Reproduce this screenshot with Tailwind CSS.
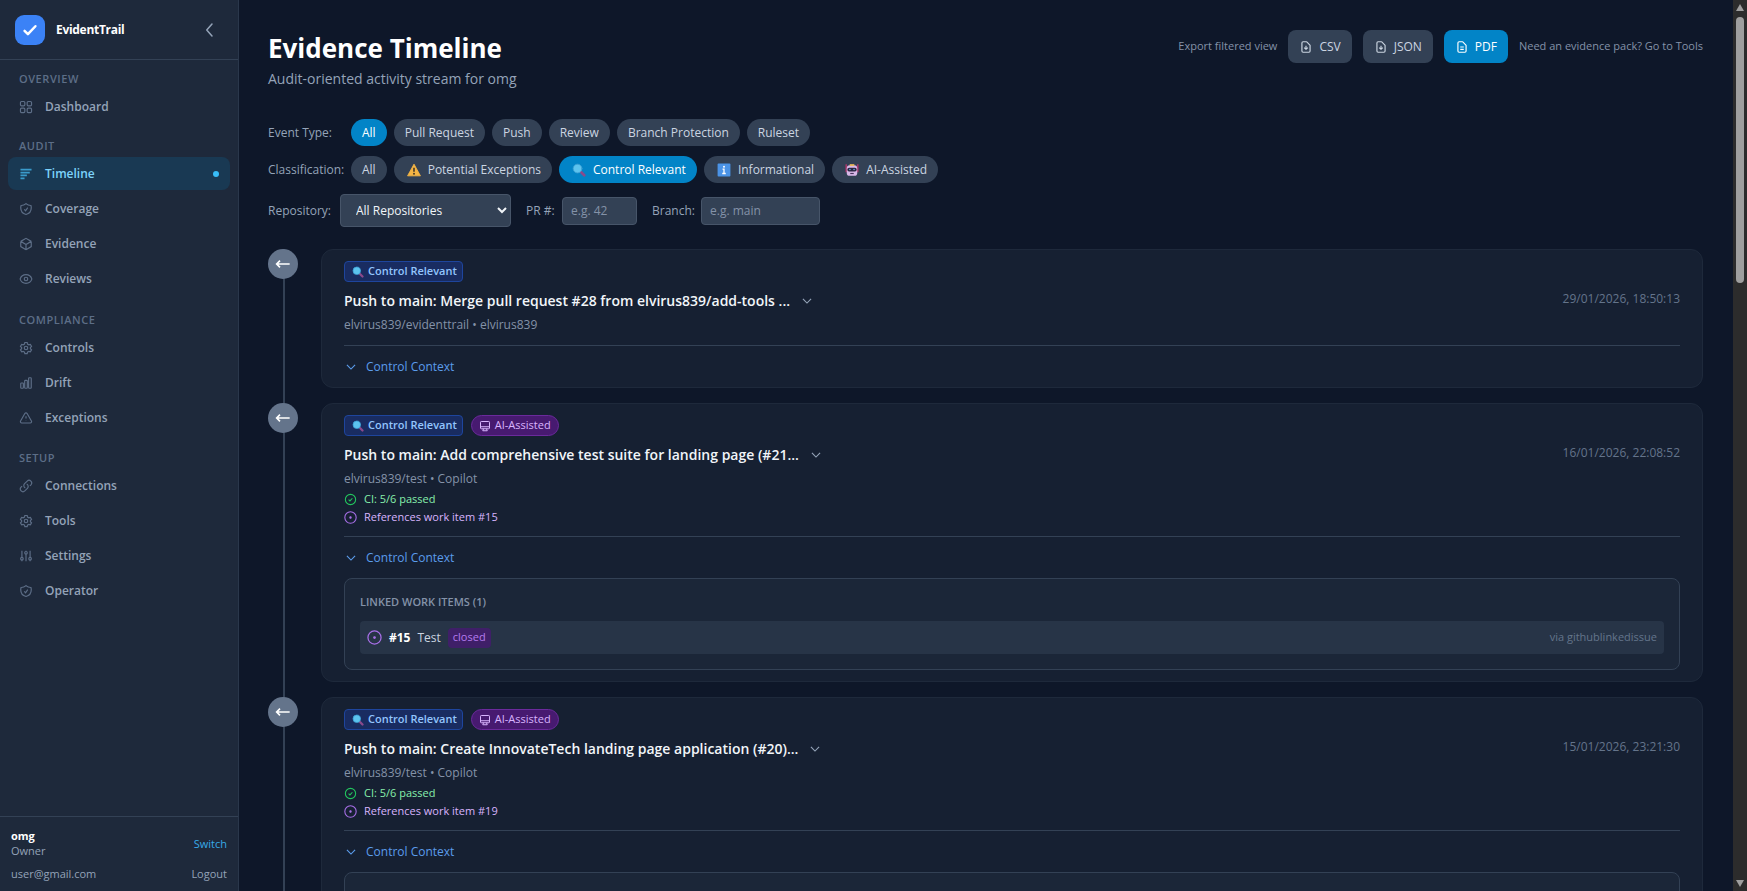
<!DOCTYPE html>
<html lang="en">
<head>
    <meta charset="UTF-8">
    <meta name="viewport" content="width=device-width, initial-scale=1.0">
    <title>EvidentTrail - Evidence Timeline</title>
    <script src="https://cdn.jsdelivr.net/npm/@tailwindcss/browser@4"></script>
</head>
<body class="h-screen flex overflow-hidden bg-[#0e1729] text-[#94a3b8] font-['Open_Sans','Noto_Sans',sans-serif]">

    <!-- Shared icons -->
    <svg class="hidden">
        <symbol id="i-grid" viewBox="0 0 24 24"><rect x="2.500" y="2.500" width="7.500" height="7.500" rx="1.8"/><rect x="14" y="2.500" width="7.500" height="7.500" rx="1.8"/><rect x="2.500" y="14" width="7.500" height="7.500" rx="1.8"/><rect x="14" y="14" width="7.500" height="7.500" rx="1.8"/></symbol>
        <symbol id="i-lines" viewBox="0 0 24 24"><path stroke-width="3" d="M2.500 4.500h19M2.500 9.500h16M2.500 14.500h11M2.500 19.500h7"/></symbol>
        <symbol id="i-shield" viewBox="0 0 24 24"><path d="M9 12.75 11.25 15 15 9.75M12 2.7A12 12 0 0 1 3.6 6 12 12 0 0 0 3 9.75c0 5.6 3.8 10.3 9 11.6 5.2-1.3 9-6 9-11.6 0-1.3-.2-2.6-.6-3.75h-.15A12 12 0 0 1 12 2.7Z"/></symbol>
        <symbol id="i-cube" viewBox="0 0 24 24"><path d="m21 7.5-9-5.25L3 7.5m18 0-9 5.25m9-5.25v9l-9 5.25M3 7.5l9 5.25M3 7.5v9l9 5.25m0-9v9"/></symbol>
        <symbol id="i-eye" viewBox="0 0 24 24"><path d="M2 12.3a1 1 0 0 1 0-.6C3.4 7.500 7.400 4.500 12 4.500s8.600 3 10 7.200a1 1 0 0 1 0 .6c-1.400 4.200-5.400 7.200-10 7.200s-8.600-3-10-7.200Z"/><circle cx="12" cy="12" r="3"/></symbol>
        <symbol id="i-cog" viewBox="0 0 24 24"><path d="M10 2.500h4l.6 2.700 2.300 1.300 2.600-.8 2 3.500-2 1.900v2.000l2 1.900-2 3.500-2.600-.8-2.300 1.300-.6 2.700h-4l-.6-2.700-2.300-1.300-2.600.8-2-3.500 2-1.900v-2l-2-1.900 2-3.500 2.600.8 2.300-1.300Z"/><circle cx="12" cy="12" r="3"/></symbol>
        <symbol id="i-chart" viewBox="0 0 24 24"><path d="M3 13.100c0-.6.5-1.100 1.100-1.100h2.300c.6 0 1.100.5 1.100 1.100v6.800c0 .6-.5 1.100-1.100 1.100H4.100C3.500 21 3 20.500 3 19.900ZM9.750 8.600c0-.6.5-1.100 1.100-1.100h2.300c.6 0 1.100.5 1.100 1.100v11.300c0 .6-.5 1.100-1.100 1.100h-2.300c-.6 0-1.100-.5-1.100-1.100ZM16.500 4.100c0-.6.5-1.100 1.100-1.100h2.300c.6 0 1.100.5 1.100 1.100v15.800c0 .6-.5 1.100-1.100 1.100h-2.300c-.6 0-1.100-.5-1.100-1.100Z"/></symbol>
        <symbol id="i-warn" viewBox="0 0 24 24"><path d="M12 9v4m0 3v.1M2.700 17.100c-.9 1.500.2 3.400 1.900 3.400h14.800c1.700 0 2.800-1.900 1.900-3.400L13.900 4.400c-.9-1.500-3-1.500-3.900 0Z"/></symbol>
        <symbol id="i-link" viewBox="0 0 24 24"><path d="M13.190 8.690a4.500 4.500 0 0 1 1.240 7.240l-4.500 4.500a4.500 4.500 0 0 1-6.360-6.360l1.760-1.760m13.350-.62 1.760-1.760a4.500 4.500 0 0 0-6.360-6.360l-4.500 4.500a4.500 4.500 0 0 0 1.240 7.240"/></symbol>
        <symbol id="i-sliders" viewBox="0 0 24 24"><path stroke-width="2" d="M5 3v11M5 19v2M12 3v1M12 9v12M19 3v11M19 19v2"/><circle cx="5" cy="16.500" r="2.200"/><circle cx="12" cy="6.500" r="2.200"/><circle cx="19" cy="16.500" r="2.200"/></symbol>
        <symbol id="i-filedown" viewBox="0 0 24 24"><path d="M12 10v6m0 0-3-3m3 3 3-3m2 8H7a2 2 0 0 1-2-2V5a2 2 0 0 1 2-2h5.600a1 1 0 0 1 .7.300l5.400 5.400a1 1 0 0 1 .3.700V19a2 2 0 0 1-2 2Z"/></symbol>
        <symbol id="i-filetext" viewBox="0 0 24 24"><path d="M9 12h6m-6 4h6m2 5H7a2 2 0 0 1-2-2V5a2 2 0 0 1 2-2h5.600a1 1 0 0 1 .7.300l5.400 5.400a1 1 0 0 1 .3.700V19a2 2 0 0 1-2 2Z"/></symbol>
        <symbol id="i-down" viewBox="0 0 24 24"><path d="m5 8.500 7 7 7-7"/></symbol>
        <symbol id="i-arrow" viewBox="0 0 24 24"><path d="M22 12H3m4.500-5-5 5 5 5"/></symbol>
        <symbol id="i-monitor" viewBox="0 0 24 24"><path d="M3 13.500h18M9 17.500l-1.500 4h9l-1.500-4M4.500 3h15A1.500 1.500 0 0 1 21 4.500V16a1.500 1.500 0 0 1-1.500 1.500h-15A1.500 1.500 0 0 1 3 16V4.500A1.500 1.500 0 0 1 4.500 3Z"/></symbol>
        <symbol id="i-check" viewBox="0 0 24 24"><path d="m8.500 12.300 2.500 2.400 4.500-5"/><circle cx="12" cy="12" r="9.500"/></symbol>
        <symbol id="i-issue" viewBox="0 0 24 24"><circle cx="12" cy="12" r="10.500"/><circle cx="12" cy="12" r="1.200" fill="currentColor"/></symbol>
        <symbol id="i-magnifier" viewBox="0 0 24 24"><path d="m15 15 6 6" stroke="#8a4a8c" stroke-width="4.500"/><circle cx="9.500" cy="9.500" r="7.500" fill="#5cc3ee" stroke="#3c9fd4" stroke-width="1.500"/></symbol>
    </svg>

    <!-- Sidebar -->
    <aside class="w-[239px] shrink-0 flex flex-col bg-[#1e293b] border-r border-[#2a374b]">
        <div class="h-[60px] shrink-0 flex items-center pl-[15px] pr-5 border-b border-[#334155]">
            <span class="size-[30px] rounded-[9px] bg-[#3b82f6] flex items-center justify-center">
                <svg class="size-5 fill-none stroke-white stroke-3" viewBox="0 0 24 24" stroke-linecap="round" stroke-linejoin="round"><path d="m5.500 13 4 4 9-9.500"/></svg>
            </span>
            <span class="ml-[11px] text-[12px] font-bold text-white tracking-tight">EvidentTrail</span>
            <button class="ml-auto" aria-label="Collapse sidebar">
                <svg class="size-[18px] fill-none stroke-[#94a3b8] stroke-2" viewBox="0 0 24 24" stroke-linecap="round" stroke-linejoin="round"><path d="m16 4-7 8 7 8"/></svg>
            </button>
        </div>

        <nav class="flex-1 px-2 pt-[10px] text-[12px] font-semibold">
            <h2 class="h-[18px] px-[11px] text-[11px] leading-[18px] font-semibold tracking-wider text-[#5d6e87]">OVERVIEW</h2>
            <ul class="mb-[14px] pt-[2px] space-y-[2px]">
                <li><a href="#" class="flex items-center h-[33px] px-[11px] gap-3 rounded-lg"><svg class="size-[14px] fill-none stroke-[#5d6e87] stroke-2"><use href="#i-grid"/></svg>Dashboard</a></li>
            </ul>
            <h2 class="h-[18px] px-[11px] text-[11px] leading-[18px] font-semibold tracking-wider text-[#5d6e87]">AUDIT</h2>
            <ul class="mb-4 pt-[2px] space-y-[2px]">
                <li><a href="#" class="flex items-center h-[33px] px-[11px] gap-3 rounded-lg bg-[#193953] text-[#7dd3fc]"><svg class="size-[14px] fill-none stroke-[#3a9bcb] stroke-2"><use href="#i-lines"/></svg>Timeline<span class="ml-auto size-[6px] rounded-full bg-[#38bdf8]"></span></a></li>
                <li><a href="#" class="flex items-center h-[33px] px-[11px] gap-3 rounded-lg"><svg class="size-[14px] fill-none stroke-[#5d6e87] stroke-2"><use href="#i-shield"/></svg>Coverage</a></li>
                <li><a href="#" class="flex items-center h-[33px] px-[11px] gap-3 rounded-lg"><svg class="size-[14px] fill-none stroke-[#5d6e87] stroke-2"><use href="#i-cube"/></svg>Evidence</a></li>
                <li><a href="#" class="flex items-center h-[33px] px-[11px] gap-3 rounded-lg"><svg class="size-[14px] fill-none stroke-[#5d6e87] stroke-2"><use href="#i-eye"/></svg>Reviews</a></li>
            </ul>
            <h2 class="h-[18px] px-[11px] text-[11px] leading-[18px] font-semibold tracking-wider text-[#5d6e87]">COMPLIANCE</h2>
            <ul class="mb-[15px] pt-[2px] space-y-[2px]">
                <li><a href="#" class="flex items-center h-[33px] px-[11px] gap-3 rounded-lg"><svg class="size-[14px] fill-none stroke-[#5d6e87] stroke-2"><use href="#i-cog"/></svg>Controls</a></li>
                <li><a href="#" class="flex items-center h-[33px] px-[11px] gap-3 rounded-lg"><svg class="size-[14px] fill-none stroke-[#5d6e87] stroke-2"><use href="#i-chart"/></svg>Drift</a></li>
                <li><a href="#" class="flex items-center h-[33px] px-[11px] gap-3 rounded-lg"><svg class="size-[14px] fill-none stroke-[#5d6e87] stroke-2"><use href="#i-warn"/></svg>Exceptions</a></li>
            </ul>
            <h2 class="h-[18px] px-[11px] text-[11px] leading-[18px] font-semibold tracking-wider text-[#5d6e87]">SETUP</h2>
            <ul class="pt-[2px] space-y-[2px]">
                <li><a href="#" class="flex items-center h-[33px] px-[11px] gap-3 rounded-lg"><svg class="size-[14px] fill-none stroke-[#5d6e87] stroke-2"><use href="#i-link"/></svg>Connections</a></li>
                <li><a href="#" class="flex items-center h-[33px] px-[11px] gap-3 rounded-lg"><svg class="size-[14px] fill-none stroke-[#5d6e87] stroke-2"><use href="#i-cog"/></svg>Tools</a></li>
                <li><a href="#" class="flex items-center h-[33px] px-[11px] gap-3 rounded-lg"><svg class="size-[14px] fill-none stroke-[#5d6e87] stroke-2"><use href="#i-sliders"/></svg>Settings</a></li>
                <li><a href="#" class="flex items-center h-[33px] px-[11px] gap-3 rounded-lg"><svg class="size-[14px] fill-none stroke-[#5d6e87] stroke-2"><use href="#i-shield"/></svg>Operator</a></li>
            </ul>
        </nav>

        <div class="px-[11px] pt-[11px] pb-[10px] border-t border-[#334155] text-[11px] leading-[15px]">
            <div class="flex items-center justify-between">
                <div>
                    <p class="font-bold text-white">omg</p>
                    <p>Owner</p>
                </div>
                <a href="#" class="text-[#38a9e8]">Switch</a>
            </div>
            <div class="mt-2 flex items-center justify-between">
                <span>user@gmail.com</span>
                <button>Logout</button>
            </div>
        </div>
    </aside>

    <!-- Main content -->
    <main class="flex-1 min-w-0 h-screen overflow-hidden pl-[29px] pr-[30px] pt-[30px] text-[12px]">
        <header class="flex items-start justify-between">
            <div>
                <h1 class="text-[26px] leading-[36px] font-bold text-white">Evidence Timeline</h1>
                <p class="text-[14px] leading-[26px]">Audit-oriented activity stream for omg</p>
            </div>
            <div class="flex items-center text-[11px] text-[#8492a8]">
                <span class="mr-[11px]">Export filtered view</span>
                <button class="mr-[11px] h-[33px] px-[11px] flex items-center gap-[6px] rounded-lg bg-[#334155] text-[12px] text-[#cbd5e1]"><svg class="size-[14px] fill-none stroke-current stroke-2"><use href="#i-filedown"/></svg>CSV</button>
                <button class="mr-[11px] h-[33px] px-[11px] flex items-center gap-[6px] rounded-lg bg-[#334155] text-[12px] text-[#cbd5e1]"><svg class="size-[14px] fill-none stroke-current stroke-2"><use href="#i-filedown"/></svg>JSON</button>
                <button class="mr-[11px] h-[33px] px-[11px] flex items-center gap-[6px] rounded-lg bg-[#0284c7] text-[12px] text-white"><svg class="size-[14px] fill-none stroke-current stroke-2"><use href="#i-filetext"/></svg>PDF</button>
                <a href="#">Need an evidence pack? Go to Tools</a>
            </div>
        </header>

        <!-- Filters -->
        <div class="mt-[27px] flex items-center">
            <span class="w-[83px]">Event Type:</span>
            <div class="flex gap-[7px] text-[#cbd5e1]">
                <button class="h-[27px] px-[11px] rounded-full bg-[#0284c7] text-white">All</button>
                <button class="h-[27px] px-[11px] rounded-full bg-[#334155]">Pull Request</button>
                <button class="h-[27px] px-[11px] rounded-full bg-[#334155]">Push</button>
                <button class="h-[27px] px-[11px] rounded-full bg-[#334155]">Review</button>
                <button class="h-[27px] px-[11px] rounded-full bg-[#334155]">Branch Protection</button>
                <button class="h-[27px] px-[11px] rounded-full bg-[#334155]">Ruleset</button>
            </div>
        </div>
        <div class="mt-[10px] flex items-center">
            <span class="w-[83px]">Classification:</span>
            <div class="flex gap-[7px] text-[#cbd5e1]">
                <button class="h-[27px] px-[11px] rounded-full bg-[#334155]">All</button>
                <button class="h-[27px] px-[11px] rounded-full bg-[#334155] flex items-center gap-[7px]">
                    <svg class="ml-[2px] size-[14px]" viewBox="0 0 24 24"><path d="M12 2 23 22H1Z" fill="#f5b544" stroke="#f5b544" stroke-width="1.500" stroke-linejoin="round"/><path d="M12 8v7" stroke="#3b3024" stroke-width="2.600"/><circle cx="12" cy="18.500" r="1.600" fill="#3b3024"/></svg>Potential Exceptions
                </button>
                <button class="h-[27px] px-[11px] rounded-full bg-[#0284c7] text-white flex items-center gap-[7px]">
                    <svg class="ml-[2px] size-[14px] fill-none" stroke-linecap="round"><use href="#i-magnifier"/></svg>Control Relevant
                </button>
                <button class="h-[27px] px-[11px] rounded-full bg-[#334155] flex items-center gap-[7px]">
                    <svg class="ml-[2px] size-[14px]" viewBox="0 0 24 24"><rect x="1" y="1" width="22" height="22" rx="1.500" fill="#4b93e6"/><circle cx="12" cy="6.500" r="1.700" fill="#fff"/><path d="M9.500 10.500H12V18m-3 0h6" fill="none" stroke="#fff" stroke-width="2.200"/></svg>Informational
                </button>
                <button class="h-[27px] px-[11px] rounded-full bg-[#334155] flex items-center gap-[7px]">
                    <svg class="ml-[2px] size-[14px]" viewBox="0 0 24 24"><path d="M2 2v14M22 2v14" stroke="#c8326e" stroke-width="2"/><rect x="3" y="4" width="18" height="18" rx="5" fill="#d9b8e8"/><path d="M8 3.500h8" stroke="#eebb5a" stroke-width="3"/><rect x="4" y="8" width="16" height="6.500" rx="3" fill="#2b2440"/><circle cx="8.500" cy="11" r="1.300" fill="#62b4ee"/><circle cx="15.500" cy="11" r="1.300" fill="#62b4ee"/><path d="M9 18h6" stroke="#4b3560" stroke-width="2"/></svg>AI-Assisted
                </button>
            </div>
        </div>
        <div class="mt-[11px] flex items-center">
            <label for="repo" class="w-[72px]">Repository:</label>
            <select id="repo" class="w-[171px] h-[33px] px-[11px] rounded-[4px] border border-[#475569] bg-[#334155] text-[#f1f5f9]">
                <option>All Repositories</option>
            </select>
            <label for="pr" class="ml-[15px] w-9">PR #:</label>
            <input id="pr" type="text" placeholder="e.g. 42" class="w-[75px] h-[28px] px-2 rounded-[4px] border border-[#475569] bg-[#334155] placeholder:text-[#8492a8]">
            <label for="branch" class="ml-[15px] w-[49px]">Branch:</label>
            <input id="branch" type="text" placeholder="e.g. main" class="w-[119px] h-[28px] px-2 rounded-[4px] border border-[#475569] bg-[#334155] placeholder:text-[#8492a8]">
        </div>

        <!-- Timeline -->
        <div class="relative mt-[22px] space-y-[15px]">
            <div class="absolute left-[15px] top-0 h-screen w-[2px] bg-[#334155]"></div>

            <article class="relative flex items-start gap-[23px]">
                <span class="size-[30px] shrink-0 rounded-full bg-[#64748b] flex items-center justify-center"><svg class="size-4 fill-none stroke-white stroke-[2.5]"><use href="#i-arrow"/></svg></span>
                <div class="flex-1 min-w-0 px-[22px] pt-[11px] pb-[10px] rounded-xl border border-[#1e293b] bg-[#162032]">
                    <div class="flex gap-2">
                        <span class="h-[21px] px-[5px] flex items-center gap-1 rounded-[4px] border border-[#1e459d] bg-[#192c61] text-[11px] font-semibold text-[#93c5fd]"><svg class="ml-[2px] size-3 fill-none" stroke-linecap="round"><use href="#i-magnifier"/></svg>Control Relevant</span>
                    </div>
                    <div class="mt-[6px] flex items-center">
                        <h3 class="text-[14px] leading-[26px] font-semibold text-[#f1f5f9]">Push to main: Merge pull request #28 from elvirus839/add-tools ...</h3>
                        <button class="ml-[10px]" aria-label="Show details"><svg class="size-[14px] fill-none stroke-[#94a3b8] stroke-2"><use href="#i-down"/></svg></button>
                        <time class="ml-auto self-start leading-[22px] text-[#64748b]">29/01/2026, 18:50:13</time>
                    </div>
                    <p class="leading-[21px] text-[#8492a8]">elvirus839/evidenttrail • elvirus839</p>
                    <div class="mt-[10px] pt-[11px] border-t border-[#334155]">
                        <button class="flex items-center gap-2 leading-[20px] text-[#5b9cec]"><svg class="size-[14px] fill-none stroke-current stroke-2"><use href="#i-down"/></svg>Control Context</button>
                    </div>
                </div>
            </article>

            <article class="relative flex items-start gap-[23px]">
                <span class="size-[30px] shrink-0 rounded-full bg-[#64748b] flex items-center justify-center"><svg class="size-4 fill-none stroke-white stroke-[2.5]"><use href="#i-arrow"/></svg></span>
                <div class="flex-1 min-w-0 px-[22px] pt-[11px] pb-[11px] rounded-xl border border-[#1e293b] bg-[#162032]">
                    <div class="flex gap-2">
                        <span class="h-[21px] px-[5px] flex items-center gap-1 rounded-[4px] border border-[#1e459d] bg-[#192c61] text-[11px] font-semibold text-[#93c5fd]"><svg class="ml-[2px] size-3 fill-none" stroke-linecap="round"><use href="#i-magnifier"/></svg>Control Relevant</span>
                        <span class="h-[21px] px-[7px] flex items-center gap-1 rounded-full border border-[#6b2a9c] bg-[#471a70] text-[11px] text-[#d8b4fe]"><svg class="size-3 fill-none stroke-current stroke-2"><use href="#i-monitor"/></svg>AI-Assisted</span>
                    </div>
                    <div class="mt-[6px] flex items-center">
                        <h3 class="text-[14px] leading-[26px] font-semibold text-[#f1f5f9]">Push to main: Add comprehensive test suite for landing page (#21...</h3>
                        <button class="ml-[10px]" aria-label="Show details"><svg class="size-[14px] fill-none stroke-[#94a3b8] stroke-2"><use href="#i-down"/></svg></button>
                        <time class="ml-auto self-start leading-[22px] text-[#64748b]">16/01/2026, 22:08:52</time>
                    </div>
                    <p class="leading-[22px] text-[#8492a8]">elvirus839/test • Copilot</p>
                    <p class="flex items-center gap-[7px] h-[18px] text-[11px] text-[#86efac]"><svg class="size-[13px] fill-none stroke-[#22c55e] stroke-2"><use href="#i-check"/></svg>CI: 5/6 passed</p>
                    <p class="flex items-center gap-[7px] h-[18px] text-[11px] text-[#d8b4fe]"><svg class="size-[13px] fill-none stroke-[#a86fe8] stroke-2"><use href="#i-issue"/></svg>References work item #15</p>
                    <div class="mt-[10px] pt-[11px] border-t border-[#334155]">
                        <button class="flex items-center gap-2 leading-[20px] text-[#5b9cec]"><svg class="size-[14px] fill-none stroke-current stroke-2"><use href="#i-down"/></svg>Control Context</button>
                        <section class="mt-[10px] p-[15px] rounded-lg border border-[#334155] bg-[#1b2638]">
                            <h4 class="text-[11px] leading-[16px] font-semibold text-[#8492a8]">LINKED WORK ITEMS (1)</h4>
                            <div class="mt-[11px] h-[33px] px-[7px] flex items-center gap-[7px] rounded-[4px] bg-[#273447] text-[#cbd5e1]">
                                <svg class="size-[15px] fill-none stroke-[#a86fe8] text-[#a86fe8] stroke-2"><use href="#i-issue"/></svg>
                                <b class="font-bold text-white">#15</b>
                                <span>Test</span>
                                <span class="h-5 px-[5px] flex items-center rounded-[4px] bg-[#3f1f68] text-[11px] text-[#b57bee]">closed</span>
                                <span class="ml-auto text-[11px] text-[#64748b]">via githublinkedissue</span>
                            </div>
                        </section>
                    </div>
                </div>
            </article>

            <article class="relative flex items-start gap-[23px]">
                <span class="size-[30px] shrink-0 rounded-full bg-[#64748b] flex items-center justify-center"><svg class="size-4 fill-none stroke-white stroke-[2.5]"><use href="#i-arrow"/></svg></span>
                <div class="flex-1 min-w-0 px-[22px] pt-[11px] pb-[11px] rounded-xl border border-[#1e293b] bg-[#162032]">
                    <div class="flex gap-2">
                        <span class="h-[21px] px-[5px] flex items-center gap-1 rounded-[4px] border border-[#1e459d] bg-[#192c61] text-[11px] font-semibold text-[#93c5fd]"><svg class="ml-[2px] size-3 fill-none" stroke-linecap="round"><use href="#i-magnifier"/></svg>Control Relevant</span>
                        <span class="h-[21px] px-[7px] flex items-center gap-1 rounded-full border border-[#6b2a9c] bg-[#471a70] text-[11px] text-[#d8b4fe]"><svg class="size-3 fill-none stroke-current stroke-2"><use href="#i-monitor"/></svg>AI-Assisted</span>
                    </div>
                    <div class="mt-[6px] flex items-center">
                        <h3 class="text-[14px] leading-[26px] font-semibold text-[#f1f5f9]">Push to main: Create InnovateTech landing page application (#20)...</h3>
                        <button class="ml-[10px]" aria-label="Show details"><svg class="size-[14px] fill-none stroke-[#94a3b8] stroke-2"><use href="#i-down"/></svg></button>
                        <time class="ml-auto self-start leading-[22px] text-[#64748b]">15/01/2026, 23:21:30</time>
                    </div>
                    <p class="leading-[22px] text-[#8492a8]">elvirus839/test • Copilot</p>
                    <p class="flex items-center gap-[7px] h-[18px] text-[11px] text-[#86efac]"><svg class="size-[13px] fill-none stroke-[#22c55e] stroke-2"><use href="#i-check"/></svg>CI: 5/6 passed</p>
                    <p class="flex items-center gap-[7px] h-[18px] text-[11px] text-[#d8b4fe]"><svg class="size-[13px] fill-none stroke-[#a86fe8] stroke-2"><use href="#i-issue"/></svg>References work item #19</p>
                    <div class="mt-[10px] pt-[11px] border-t border-[#334155]">
                        <button class="flex items-center gap-2 leading-[20px] text-[#5b9cec]"><svg class="size-[14px] fill-none stroke-current stroke-2"><use href="#i-down"/></svg>Control Context</button>
                        <section class="mt-[10px] h-24 rounded-lg border border-[#334155] bg-[#1b2638]"></section>
                    </div>
                </div>
            </article>
        </div>
    </main>

    <!-- Scrollbar -->
    <div class="w-[14px] shrink-0 flex flex-col items-center justify-between py-1 bg-[#2c2c2c]">
        <div class="flex flex-col items-center gap-[6px]">
            <svg class="w-2 h-[7px] fill-[#9f9f9f]" viewBox="0 0 8 7"><path d="M4 0 8 7H0Z"/></svg>
            <span class="w-2 h-[266px] rounded-full bg-[#9f9f9f]"></span>
        </div>
        <svg class="w-2 h-[7px] fill-[#9f9f9f]" viewBox="0 0 8 7"><path d="M4 7 8 0H0Z"/></svg>
    </div>
</body>
</html>
